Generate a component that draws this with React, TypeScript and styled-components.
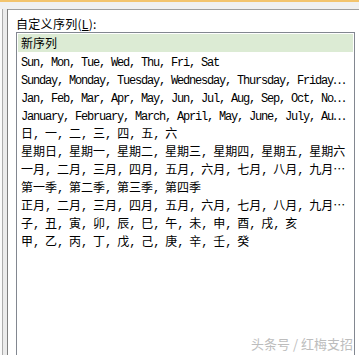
import React from 'react';
import styled, { createGlobalStyle } from 'styled-components';

const rows = [
  '新序列',
  'Sun, Mon, Tue, Wed, Thu, Fri, Sat',
  'Sunday, Monday, Tuesday, Wednesday, Thursday, Friday⋯',
  'Jan, Feb, Mar, Apr, May, Jun, Jul, Aug, Sep, Oct, No⋯',
  'January, February, March, April, May, June, July, Au⋯',
  '日, 一, 二, 三, 四, 五, 六',
  '星期日, 星期一, 星期二, 星期三, 星期四, 星期五, 星期六',
  '一月, 二月, 三月, 四月, 五月, 六月, 七月, 八月, 九月⋯',
  '第一季, 第二季, 第三季, 第四季',
  '正月, 二月, 三月, 四月, 五月, 六月, 七月, 八月, 九月⋯',
  '子, 丑, 寅, 卯, 辰, 巳, 午, 未, 申, 酉, 戌, 亥',
  '甲, 乙, 丙, 丁, 戊, 己, 庚, 辛, 壬, 癸',
];

// split a row into half-width (latin) and full-width (cjk) runs,
// so each gets the 6px / 12px cell of the original dialog font
function splitRuns(text: string) {
  const runs: { wide: boolean; text: string }[] = [];
  for (const ch of text) {
    const wide = ch.charCodeAt(0) >= 0x2000;
    const last = runs[runs.length - 1];
    if (last && last.wide === wide) last.text += ch;
    else runs.push({ wide, text: ch });
  }
  return runs;
}

function MixedText({ text }: { text: string }) {
  return (
    <>
      {splitRuns(text).map((r, i) => (
        <Run key={i} $wide={r.wide}>
          {r.text}
        </Run>
      ))}
    </>
  );
}

export default function App() {
  return (
    <Screen>
      <GlobalStyle />
      <TitleStrip />
      <TopGap />
      <Body>
        <LeftRail />
        <Panel>
          <Label>
            自定义序列(<u>L</u>):
          </Label>
          <ListBox>
            {rows.map((r, i) => (
              <ListItem key={i} $selected={i === 0}>
                <MixedText text={r} />
              </ListItem>
            ))}
          </ListBox>
        </Panel>
      </Body>
      <Watermark>头条号 / 红梅支招</Watermark>
    </Screen>
  );
}

const GlobalStyle = createGlobalStyle`
  html, body {
    margin: 0;
    padding: 0;
    background: #f0f0f0;
  }
`;

const Screen = styled.div`
  position: relative;
  width: 359px;
  height: 355px;
  overflow: hidden;
  display: flex;
  flex-direction: column;
  background: #f0f0f0;
`;

const TitleStrip = styled.div`
  height: 2px;
  background: #f3c46d;
`;

const TopGap = styled.div`
  height: 7px;
`;

const Body = styled.div`
  flex: 1;
  display: flex;
  min-height: 0;
  background: #fafafa;
`;

const LeftRail = styled.div`
  width: 4px;
  margin-left: 2px;
  border-left: 1px solid #acacac;
  border-right: 1px solid #7f7f7f;
  background: #ebebeb;
`;

const Panel = styled.div`
  flex: 1;
  display: flex;
  flex-direction: column;
  background: #fff;
  border-top: 1px solid #a0a0a0;
  padding: 7px 4px 0 8px;
`;

const Label = styled.div`
  height: 14px;
  line-height: 14px;
  font-family: 'Noto Sans CJK SC', sans-serif;
  font-size: 12px;
  color: #000;
  margin-bottom: 1px;
  letter-spacing: 0.3px;

  u {
    text-underline-offset: 1px;
  }
`;

const ListBox = styled.div`
  flex: 1;
  border: 1px solid #828790;
  border-bottom: 0;
  padding: 1px;
  background: #fff;
`;

const ListItem = styled.div<{ $selected?: boolean }>`
  height: 18px;
  line-height: 18px;
  padding-left: 3px;
  white-space: pre;
  overflow: hidden;
  color: #000;
  background: ${(p) => (p.$selected ? '#dcebd4' : 'transparent')};
`;

const Run = styled.span<{ $wide: boolean }>`
  font-size: 12px;
  font-family: ${(p) =>
    p.$wide ? "'Noto Sans CJK SC', sans-serif" : "'Liberation Mono', monospace"};
  letter-spacing: ${(p) => (p.$wide ? '0' : '-1.2px')};
`;

const Watermark = styled.div`
  position: absolute;
  right: 6px;
  bottom: 5px;
  line-height: 13px;
  font-family: 'Noto Sans CJK SC', sans-serif;
  font-size: 13px;
  color: #bdbdbd;
`;
